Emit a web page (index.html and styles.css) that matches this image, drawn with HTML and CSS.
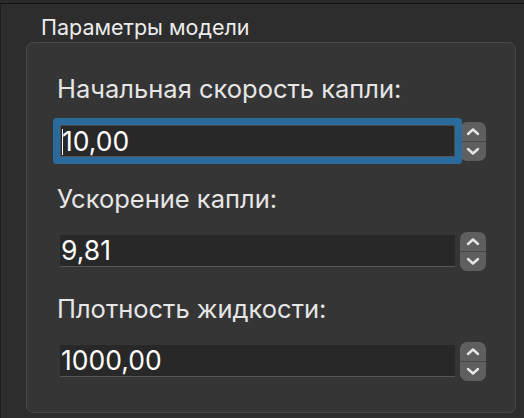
FILE: index.html
```html
<!DOCTYPE html>
<html lang="ru">
<head>
<meta charset="utf-8">
<link rel="stylesheet" href="styles.css">
</head>
<body>
<div class="window">
  <div class="title">Параметры модели</div>
  <div class="group">
    <div class="row">
      <div class="label">Начальная скорость капли:</div>
      <div class="fieldrow">
        <div class="field focused"><span class="caret"></span>10,00</div>
        <div class="stepper">
          <div class="half"><svg viewBox="0 0 14 9" width="14" height="9"><path d="M2 7 L7 2.5 L12 7" /></svg></div>
          <div class="half down"><svg viewBox="0 0 14 9" width="14" height="9"><path d="M2 2 L7 6.5 L12 2" /></svg></div>
        </div>
      </div>
    </div>
    <div class="row">
      <div class="label">Ускорение капли:</div>
      <div class="fieldrow">
        <div class="field">9,81</div>
        <div class="stepper">
          <div class="half"><svg viewBox="0 0 14 9" width="14" height="9"><path d="M2 7 L7 2.5 L12 7" /></svg></div>
          <div class="half down"><svg viewBox="0 0 14 9" width="14" height="9"><path d="M2 2 L7 6.5 L12 2" /></svg></div>
        </div>
      </div>
    </div>
    <div class="row">
      <div class="label">Плотность жидкости:</div>
      <div class="fieldrow">
        <div class="field">1000,00</div>
        <div class="stepper">
          <div class="half"><svg viewBox="0 0 14 9" width="14" height="9"><path d="M2 7 L7 2.5 L12 7" /></svg></div>
          <div class="half down"><svg viewBox="0 0 14 9" width="14" height="9"><path d="M2 2 L7 6.5 L12 2" /></svg></div>
        </div>
      </div>
    </div>
  </div>
</div>
</body>
</html>
```
FILE: styles.css
```css
html, body {
  margin: 0;
  padding: 0;
  width: 524px;
  height: 418px;
  overflow: hidden;
  background: #2a2a2a;
  font-family: "Inter", "Noto Sans", sans-serif;
  color: #e8e8e8;
}

.window {
  margin-top: 3px;
  height: 415px;
  box-sizing: border-box;
  border-top: 1px solid #121212;
  border-left: 1px solid #1c1c1c;
  background: #2d2d2d;
}

.title {
  padding: 11px 0 0 40px;
  font-size: 21.5px;
  line-height: 24px;
  color: #ececec;
}

.group {
  margin: 3px 8px 0 25px;
  height: 371px;
  box-sizing: border-box;
  border: 1px solid #474747;
  border-radius: 7px;
  background: #353535;
  padding: 33px 29px 0 33px;
  display: flex;
  flex-direction: column;
  gap: 25px;
}

.row {
  display: flex;
  flex-direction: column;
  gap: 19px;
}

.label {
  font-size: 25.5px;
  line-height: 26px;
  margin-left: -3px;
  color: #e6e6e6;
}

.fieldrow {
  display: flex;
  align-items: center;
  gap: 5px;
  height: 40px;
}

.field {
  flex: 1;
  height: 32px;
  box-sizing: border-box;
  background: #282828;
  border-bottom: 1px solid #575757;
  font-size: 26.5px;
  line-height: 31px;
  padding-left: 1px;
  color: #ffffff;
  position: relative;
}

.field.focused {
  border: 1px solid #4a4a4a;
  border-bottom-color: #575757;
  box-shadow: 0 0 0 7px #2a6b9b;
  border-radius: 1px;
}

.caret {
  display: inline-block;
  width: 1px;
  height: 26px;
  background: #ffffff;
  vertical-align: -4px;
  margin-right: -1px;
}

.stepper {
  width: 26px;
  height: 39px;
  border-radius: 7px;
  background: #5f5f5f;
  display: flex;
  flex-direction: column;
  overflow: hidden;
}

.half {
  flex: 1;
  display: flex;
  align-items: center;
  justify-content: center;
}

.half.down {
  border-top: 1px solid #474747;
}

.half svg path {
  fill: none;
  stroke: #e6e6e6;
  stroke-width: 2.4;
  stroke-linecap: round;
  stroke-linejoin: round;
}
```
